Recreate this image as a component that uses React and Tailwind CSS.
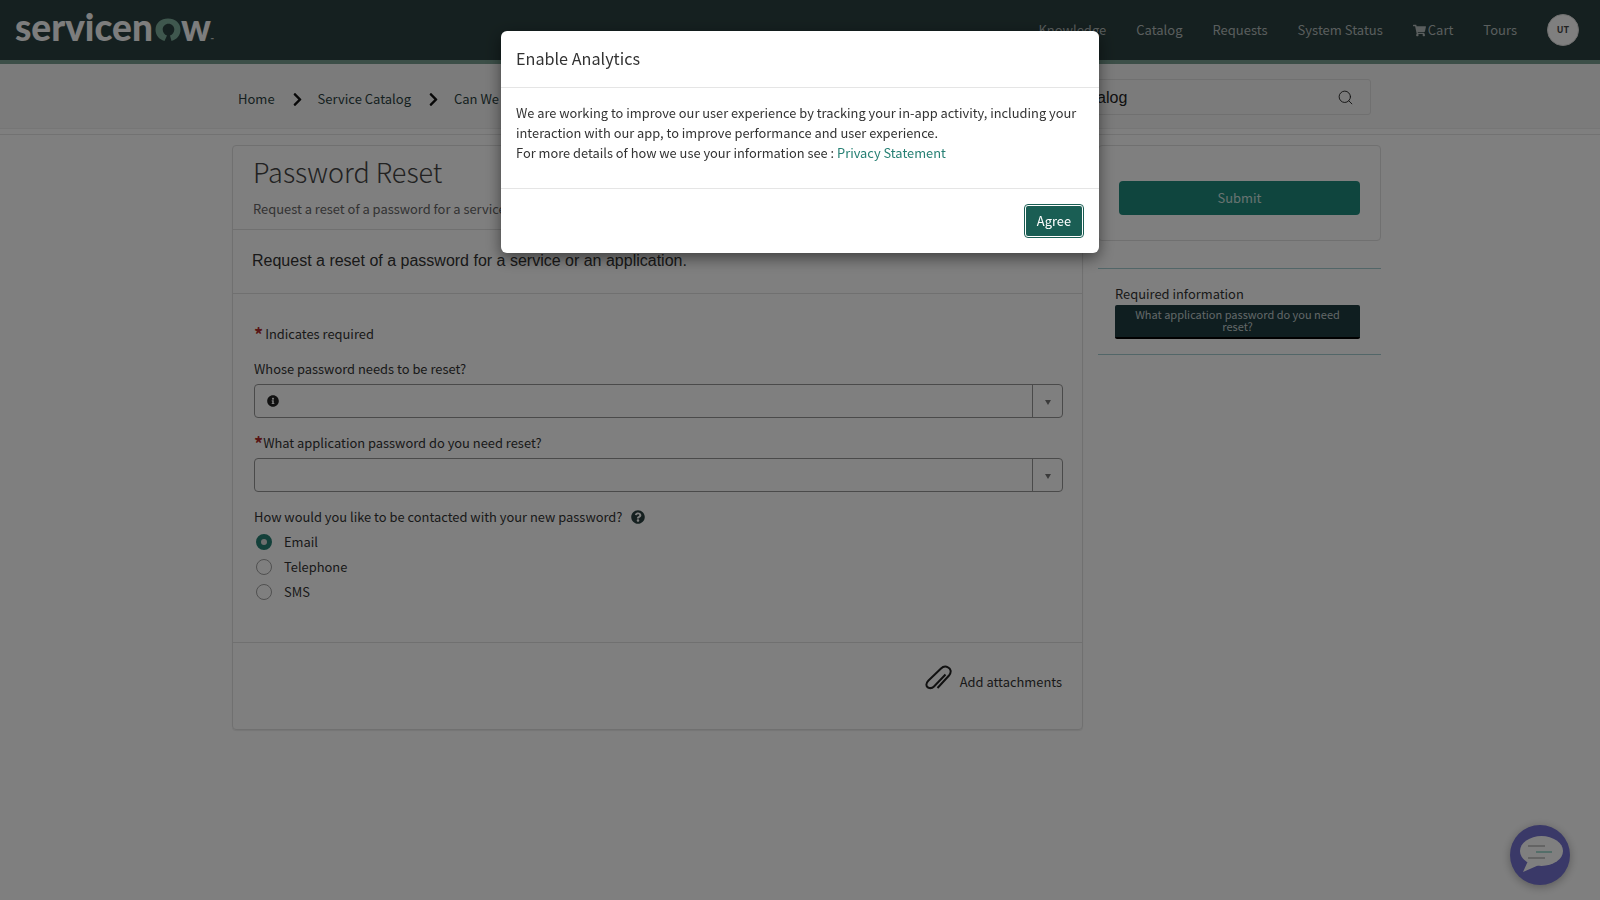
import { Search } from 'lucide-react'
import { FaChevronRight, FaInfoCircle, FaQuestionCircle, FaShoppingCart } from 'react-icons/fa'

const NAV = ['Knowledge', 'Catalog', 'Requests', 'System Status']
const RADIOS = ['Email', 'Telephone', 'SMS']

function Logo() {
  return (
    <div className="flex items-baseline font-['Lato',sans-serif] font-black text-[37px] leading-none text-[#fafafa] ml-[15px] mb-[7px]">
      <span>servicen</span>
      <svg width="26" height="23" viewBox="0 0 26 23" className="ml-[2px] mb-[-1px]">
        <path d="M9.500 23C4 21.500 .5 17 .5 11.500 .5 5 6 .5 13 .5s12.500 4.500 12.500 11c0 5.500-3.500 10-9 11.500l-1.500-5.500c2.500-.7 4.300-3 4.300-6 0-3.300-2.600-5.800-5.800-5.800s-5.800 2.500-5.800 5.800c0 3 1.800 5.300 4.300 6z" fill="#7fae9c" />
      </svg>
      <span>w</span>
      <span className="text-[4px]">™</span>
    </div>
  )
}

function Header() {
  return (
    <header className="h-[64px] bg-[#2b4140] border-b-[4px] border-[#789e90] flex items-center justify-between">
      <Logo />
      <nav className="flex items-center gap-[30px] pr-[21px] text-[13px] leading-[20px] text-[#b4bcbc]">
        {NAV.map((item) => (
          <a key={item} href="#">{item}</a>
        ))}
        <a href="#" className="flex items-center gap-[2px]">
          <FaShoppingCart className="text-[13px]" />
          Cart
        </a>
        <a href="#">Tours</a>
        <div className="w-[32px] h-[32px] rounded-full bg-white border border-[#ddd] flex items-center justify-center text-[9px] font-bold text-[#444]">
          UT
        </div>
      </nav>
    </header>
  )
}

function Breadcrumbs() {
  return (
    <div className="h-[71px] border-b border-[#e4e4e4]">
      <div className="h-[65px] bg-[#f7f7f7] border-b border-[#ececec] flex items-start pl-[238px] pr-[229px]">
        <ol className="flex items-center h-[20px] mt-[25px] text-[13px] leading-[20px] text-[#2b4140]">
          <li>Home</li>
          <FaChevronRight className="text-[15px] text-[#111] ml-[15px] mr-[13px]" />
          <li>Service Catalog</li>
          <FaChevronRight className="text-[15px] text-[#111] ml-[15px] mr-[13px]" />
          <li>Can We Help You?</li>
        </ol>
        <div className="ml-auto mt-[15px] w-[362px] h-[36px] border border-[#e0e0e0] rounded-[3px] flex items-center pl-[7px] pr-[16px]">
          <span className="font-['Liberation_Sans',sans-serif] text-[16px] text-[#222] pt-[1px]">Search Catalog</span>
          <Search size={17} strokeWidth={1.3} className="ml-auto text-[#222]" />
        </div>
      </div>
    </div>
  )
}

function Select({ icon }) {
  return (
    <div className="mt-[5px] h-[34px] border border-[#959595] rounded-[4px] flex">
      <div className="flex-1 flex items-center pl-[12px]">
        {icon && <FaInfoCircle className="text-[12px] text-[#222]" />}
      </div>
      <div className="w-[30px] border-l border-[#959595] flex items-center justify-center pt-[2px]">
        <div className="w-0 h-0 border-x-[3.5px] border-x-transparent border-t-[5px] border-t-[#777]" />
      </div>
    </div>
  )
}

function Star() {
  return <span className="inline-block translate-y-[3px] text-[#b02a2a] font-bold text-[18px] leading-[14px]">*</span>
}

function FormPanel() {
  return (
    <section className="w-[851px] border border-[#e0e0e0] rounded-[4px] shadow-[0_1px_1px_rgba(0,0,0,0.08)]">
      <div className="h-[84px] border-b border-[#e0e0e0] px-[20px] pt-[6px]">
        <h1 className="text-[27px] leading-[40px] font-light text-[#444]">Password Reset</h1>
        <p className="mt-[7px] text-[12.900px] leading-[20px] text-[#666]">Request a reset of a password for a service or an application.</p>
      </div>
      <div className="h-[64px] border-b border-[#e0e0e0] px-[19px] pt-[21px]">
        <p className="font-['Liberation_Sans',sans-serif] text-[16px] leading-[20px] text-[#333]">
          Request a reset of a password for a service or an application.
        </p>
      </div>
      <div className="h-[349px] border-b border-[#e0e0e0] pl-[21px] pr-[19px] pt-[30px] text-[12.900px] leading-[20px] text-[#333]">
        <p><Star /><span className="ml-[2px]">Indicates required</span></p>
        <label className="block mt-[15px]">Whose password needs to be reset?</label>
        <Select icon />
        <label className="block mt-[15px]"><Star />What application password do you need reset?</label>
        <Select />
        <label className="flex items-center mt-[15px]">
          How would you like to be contacted with your new password?
          <FaQuestionCircle className="ml-[9px] text-[14px] text-[#2b4140]" />
        </label>
        <div className="mt-[2px]">
          {RADIOS.map((r, i) => (
            <div key={r} className="h-[25px] flex items-center pl-[2px]">
              {i === 0 ? (
                <span className="w-[16px] h-[16px] rounded-full border-[5px] border-[#278074] bg-[#ddd]" />
              ) : (
                <span className="w-[16px] h-[16px] rounded-full border border-[#a0a0a0]" />
              )}
              <span className="ml-[12px]">{r}</span>
            </div>
          ))}
        </div>
      </div>
      <div className="h-[86px] px-[20px] pt-[22px] flex justify-end items-start text-[12.900px] leading-[20px] text-[#333]">
        <svg width="27" height="25" viewBox="0 0 27 25" fill="none" stroke="#222" strokeWidth="2">
          <path d="M12.500 23L24 10.500C27 7 25.500 3.500 23 2.300 20.500 1 18 1.500 16 3.500L3.500 15.500C.5 18.500 1 21.500 3 22.500 5 23.500 7.500 23 9 21.500L20.500 9.500" />
        </svg>
        <span className="ml-[8px] mt-[7px]">Add attachments</span>
      </div>
    </section>
  )
}

function Sidebar() {
  return (
    <aside className="w-[283px]">
      <div className="h-[96px] border border-[#e0e0e0] rounded-[4px] pl-[20px] pr-[20px] pt-[35px]">
        <button className="w-full h-[34px] rounded-[4px] bg-[#1f8a7c] text-[12.900px] text-[#d0e6e2]">Submit</button>
      </div>
      <div className="mt-[27px] h-[87px] border-y border-[#a4ccd0] pl-[17px] pr-[21px] pt-[15px] text-[12.900px] leading-[20px] text-[#333]">
        <p className="mb-[1px]">Required information</p>
        <div className="h-[34px] rounded-[2px] bg-[#1e3c40] border-b-[2px] border-black text-[11px] leading-[12px] text-[#c4cfd0] text-center pt-[3px] px-[16px]">
          What application password do you need reset?
        </div>
      </div>
    </aside>
  )
}

function AnalyticsModal() {
  return (
    <div className="fixed inset-0 bg-black/50 flex justify-center items-start">
      <div className="mt-[31px] w-[598px] h-[222px] bg-white rounded-[6px] shadow-[0_5px_15px_rgba(0,0,0,0.5)] text-[12.850px] leading-[20px] text-[#333]">
        <div className="h-[57px] border-b border-[#e5e5e5] pl-[15px] pb-[2px] flex items-center">
          <h2 className="text-[16.200px] leading-[26px] text-[#333]">Enable Analytics</h2>
        </div>
        <div className="h-[101px] border-b border-[#e5e5e5] px-[15px] pt-[15px]">
          <p>
            We are working to improve our user experience by tracking your in-app activity, including your interaction with our app, to improve performance and user experience.
          </p>
          <p>
            For more details of how we use your information see : <a href="#" className="text-[#278074]">Privacy Statement</a>
          </p>
        </div>
        <div className="flex justify-end pr-[17px] pt-[17px]">
          <button className="h-[30px] w-[56px] rounded-[2px] bg-[#1a5e54] text-white text-[12.900px] outline outline-1 outline-offset-1 outline-[#1a5e54]">Agree</button>
        </div>
      </div>
    </div>
  )
}

function ChatButton() {
  return (
    <div className="fixed right-[30px] bottom-[15px] w-[60px] h-[60px] rounded-full bg-[#7472d0] shadow-[0_2px_10px_rgba(0,0,0,0.3)]">
      <svg width="60" height="60" viewBox="0 0 60 60">
        <ellipse cx="31.500" cy="26" rx="21.500" ry="15" fill="#ffffff" />
        <path d="M18 36L13 47 29 40z" fill="#ffffff" />
        <rect x="18" y="20" width="17" height="2" fill="#c8c8c8" />
        <rect x="26" y="26" width="16" height="2" fill="#a8dcd2" />
        <rect x="18" y="32" width="17" height="2" fill="#c8c8c8" />
      </svg>
    </div>
  )
}

export default function App() {
  return (
    <div className="min-h-screen bg-white font-['Noto_Sans_CJK_SC','Source_Sans_Pro',sans-serif]">
      <Header />
      <Breadcrumbs />
      <main className="pt-[10px] pl-[232px] flex gap-[15px]">
        <FormPanel />
        <Sidebar />
      </main>
      <ChatButton />
      <AnalyticsModal />
    </div>
  )
}
